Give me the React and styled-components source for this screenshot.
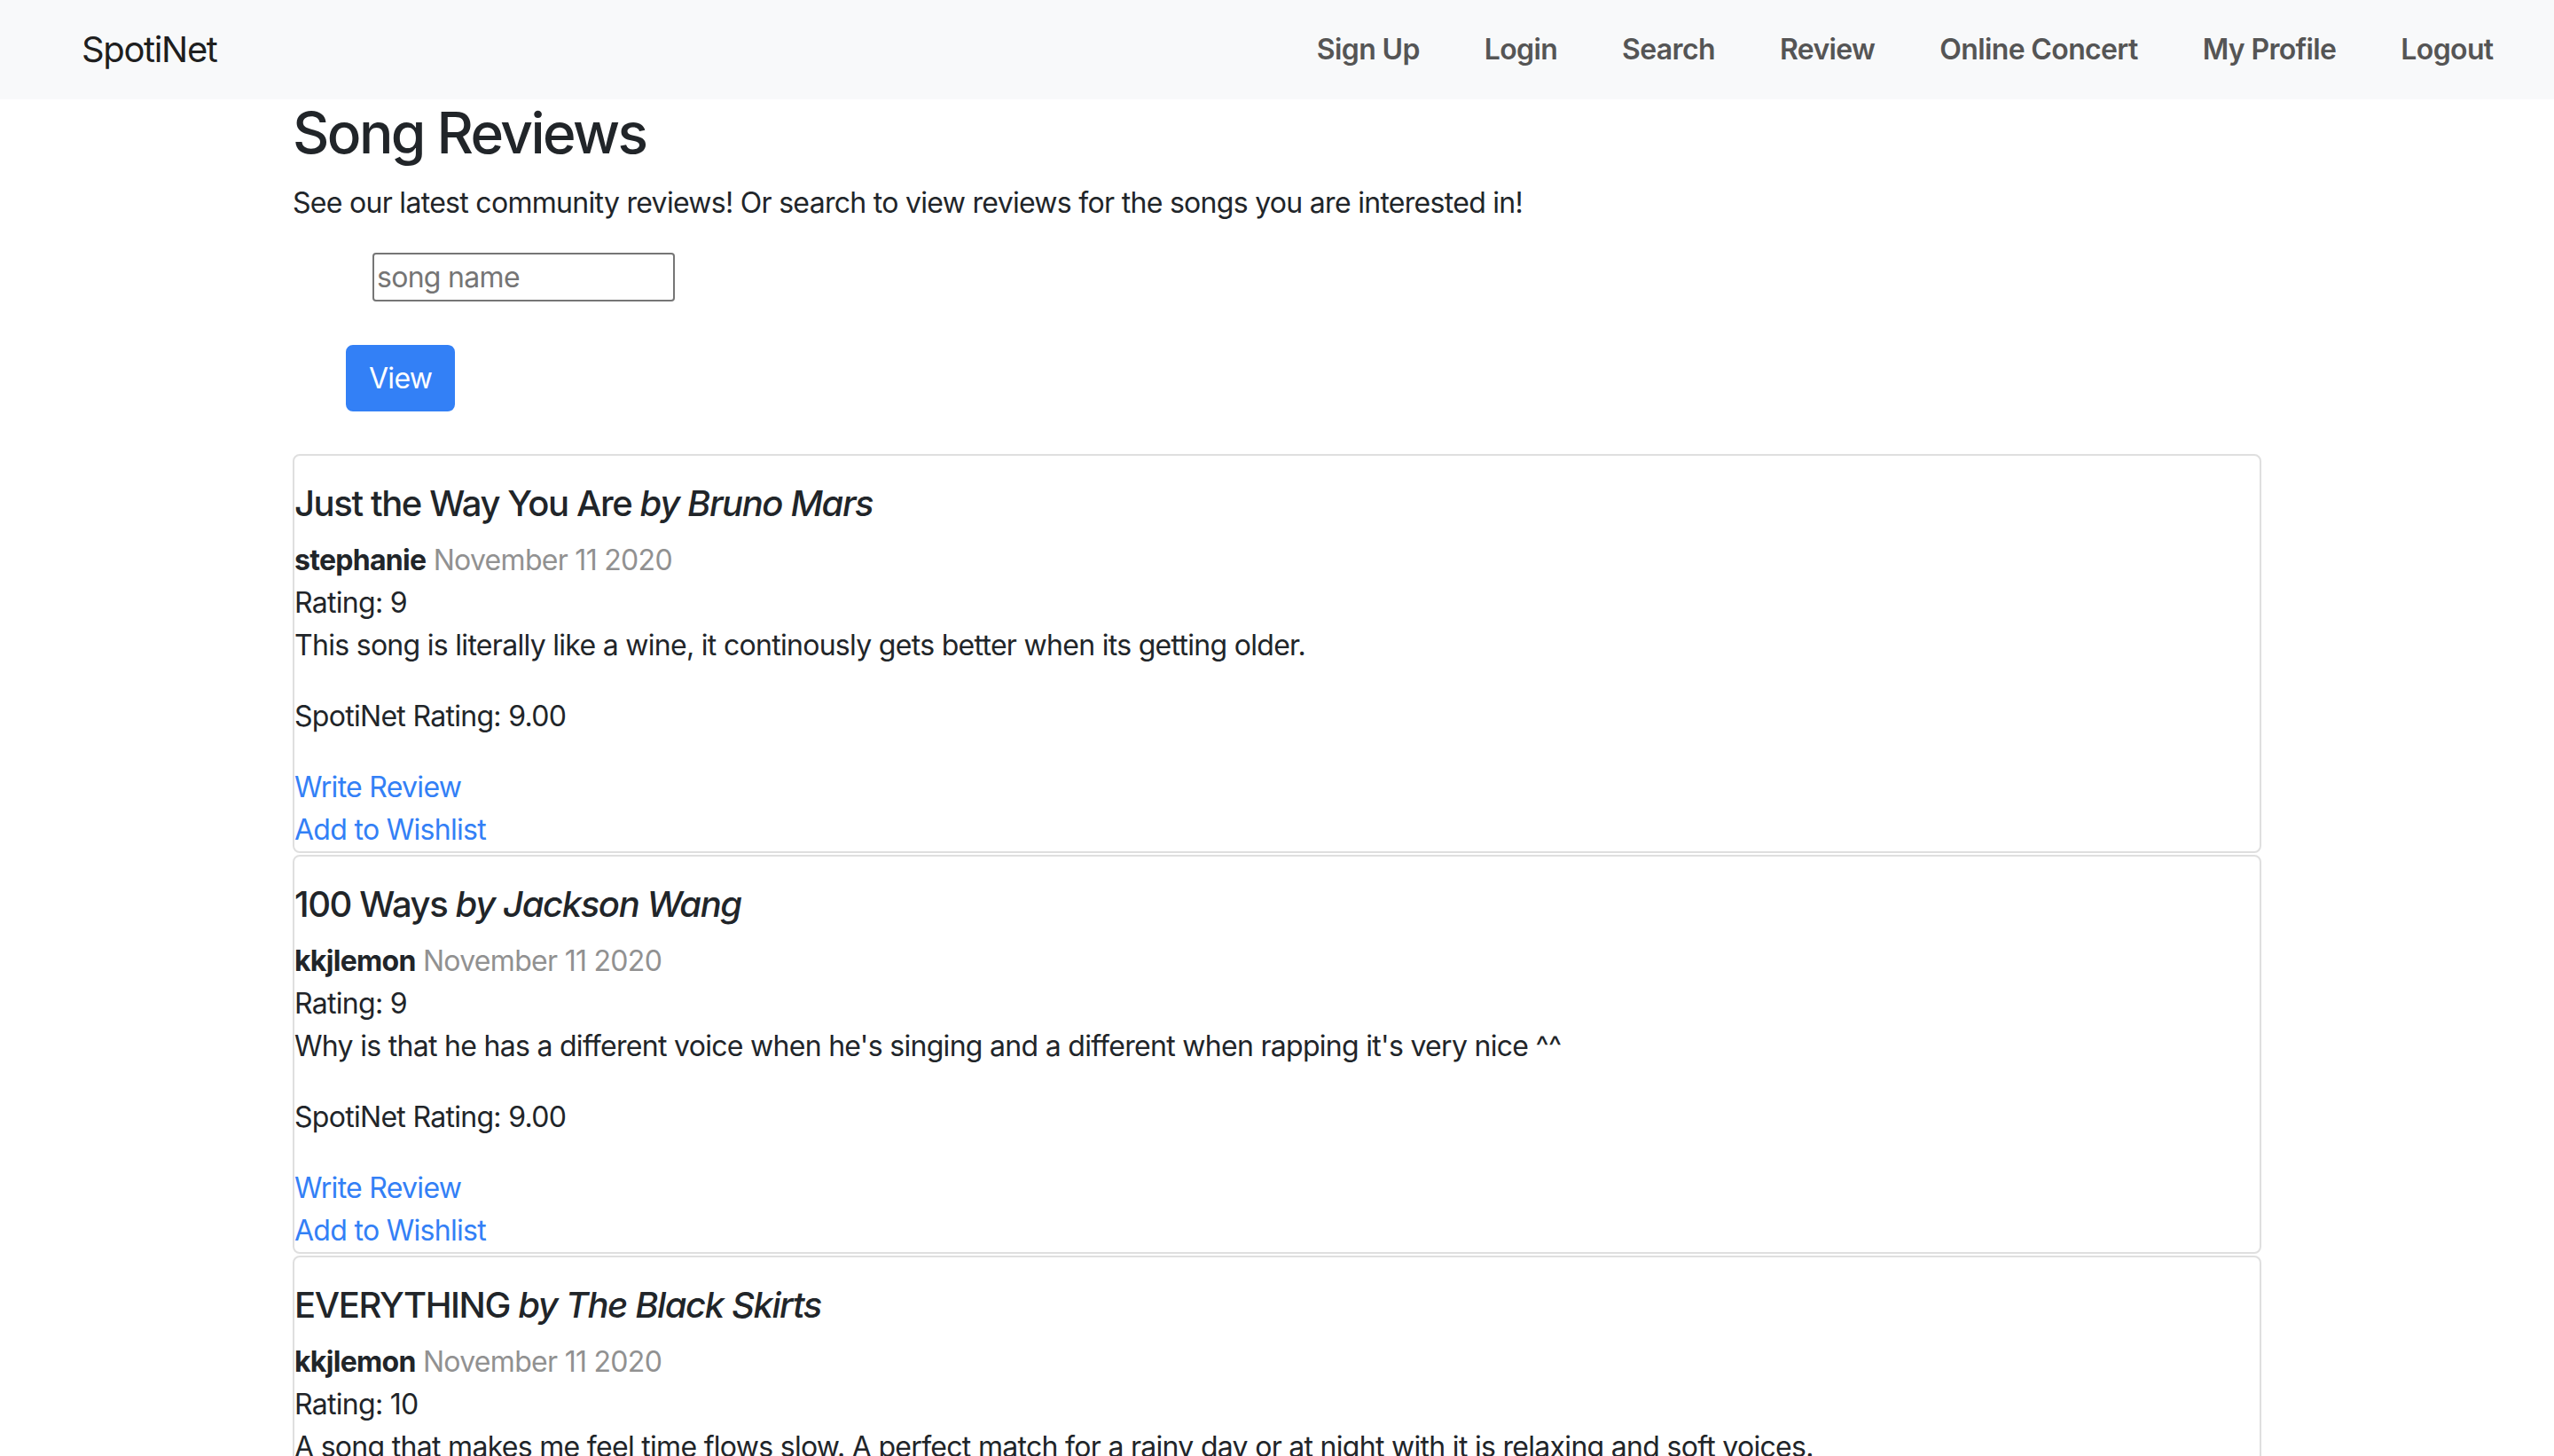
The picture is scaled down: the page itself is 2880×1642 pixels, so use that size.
import React from 'react';
import styled, { createGlobalStyle } from 'styled-components';

const GlobalStyle = createGlobalStyle`
  * { box-sizing: border-box; }
  ::-webkit-scrollbar { width: 0; height: 0; }
  body {
    margin: 0;
    font-family: Inter, "Noto Sans", "Liberation Sans", sans-serif;
    font-size: 32px;
    line-height: 1.5;
    letter-spacing: -0.022em;
    color: #212529;
    background: #fff;
  }
`;

const blue = '#3380f6';

const Navbar = styled.nav`
  display: flex;
  align-items: center;
  justify-content: space-between;
  height: 112px;
  padding: 0 32px 0 92px;
  background-color: #f8f9fa;
`;

const Brand = styled.a`
  font-size: 40px;
  line-height: 60px;
  letter-spacing: -0.034em;
  color: rgba(0, 0, 0, 0.9);
  text-decoration: none;
`;

const NavList = styled.ul`
  display: flex;
  align-items: center;
  list-style: none;
  margin: 0;
  padding: 0;
`;

const NavLink = styled.a`
  display: block;
  padding: 0 36.5px;
  font-weight: 600;
  letter-spacing: -0.02em;
  color: #555;
  text-decoration: none;
`;

const Container = styled.main`
  width: 2220px;
  margin: 0 auto;
`;

const PageTitle = styled.h2`
  margin: 0 0 16px;
  font-size: 64px;
  font-weight: 500;
  line-height: 1.2;
  letter-spacing: -0.04em;
`;

const Intro = styled.p`
  margin: 0 0 32px;
`;

const SearchForm = styled.form`
  display: flex;
  flex-direction: column;
  align-items: flex-start;
  padding-bottom: 48px;
`;

const SearchInput = styled.input`
  width: 341px;
  height: 55px;
  margin-left: 90px;
  padding: 0 3px;
  border: 2px solid #767676;
  border-radius: 4px;
  font: inherit;
  letter-spacing: inherit;
  color: #212529;
  &::placeholder { color: #757575; }
`;

const ViewButton = styled.button`
  margin: 49px 0 0 60px;
  padding: 12px 24px;
  border: 2px solid ${blue};
  border-radius: 8px;
  background-color: ${blue};
  color: #fff;
  font: inherit;
  letter-spacing: inherit;
  line-height: 47px;
  cursor: pointer;
`;

const ReviewCard = styled.article`
  padding-top: 30px;
  margin-bottom: 2px;
  border: 2px solid #dfdfdf;
  border-radius: 8px;
`;

const CardTitle = styled.h5`
  margin: 0 0 16px;
  font-size: 40px;
  font-weight: 500;
  line-height: 1.2;
  letter-spacing: -0.035em;
`;

const Author = styled.strong`
  font-weight: 700;
`;

const DateText = styled.span`
  color: #919191;
`;

const Line = styled.div``;

const Para = styled.p`
  margin: 0 0 32px;
`;

const ActionLink = styled.a`
  display: block;
  width: fit-content;
  color: ${blue};
  text-decoration: none;
`;

const reviews = [
  {
    song: 'Just the Way You Are',
    artist: 'Bruno Mars',
    user: 'stephanie',
    date: 'November 11 2020',
    rating: 9,
    text: 'This song is literally like a wine, it continously gets better when its getting older.',
    avg: '9.00',
  },
  {
    song: '100 Ways',
    artist: 'Jackson Wang',
    user: 'kkjlemon',
    date: 'November 11 2020',
    rating: 9,
    text: "Why is that he has a different voice when he's singing and a different when rapping it's very nice ^^",
    avg: '9.00',
  },
  {
    song: 'EVERYTHING',
    artist: 'The Black Skirts',
    user: 'kkjlemon',
    date: 'November 11 2020',
    rating: 10,
    text: 'A song that makes me feel time flows slow. A perfect match for a rainy day or at night with it is relaxing and soft voices.',
    avg: '10.00',
  },
];

const links = ['Sign Up', 'Login', 'Search', 'Review', 'Online Concert', 'My Profile', 'Logout'];

export default function App() {
  return (
    <>
      <GlobalStyle />
      <Navbar>
        <Brand href="#">SpotiNet</Brand>
        <NavList>
          {links.map((l) => (
            <li key={l}><NavLink href="#">{l}</NavLink></li>
          ))}
        </NavList>
      </Navbar>
      <Container>
        <PageTitle>Song Reviews</PageTitle>
        <Intro>See our latest community reviews! Or search to view reviews for the songs you are interested in!</Intro>
        <SearchForm onSubmit={(e) => e.preventDefault()}>
          <SearchInput type="text" placeholder="song name" />
          <ViewButton type="submit">View</ViewButton>
        </SearchForm>
        {reviews.map((r, i) => (
          <ReviewCard key={i}>
            <CardTitle>{r.song} <i>by {r.artist}</i></CardTitle>
            <Line><Author>{r.user}</Author> <DateText>{r.date}</DateText></Line>
            <Line>Rating: {r.rating}</Line>
            <Para>{r.text}</Para>
            <Para>SpotiNet Rating: {r.avg}</Para>
            <ActionLink href="#">Write Review</ActionLink>
            <ActionLink href="#">Add to Wishlist</ActionLink>
          </ReviewCard>
        ))}
      </Container>
    </>
  );
}
